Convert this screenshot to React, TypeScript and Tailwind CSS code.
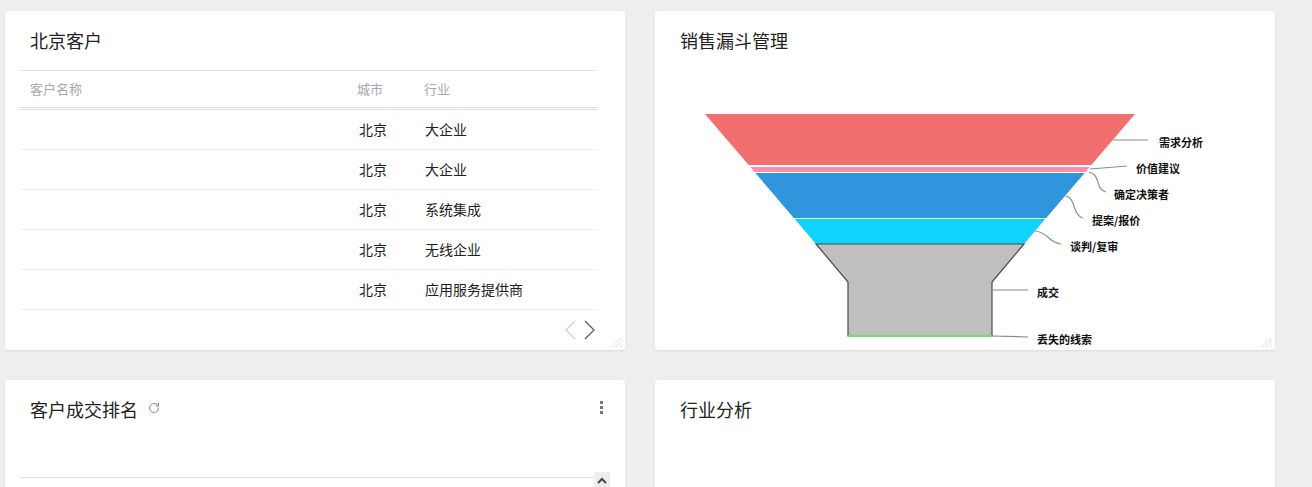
import { RotateCw } from "lucide-react";

const rows = [
  { city: "北京", industry: "大企业" },
  { city: "北京", industry: "大企业" },
  { city: "北京", industry: "系统集成" },
  { city: "北京", industry: "无线企业" },
  { city: "北京", industry: "应用服务提供商" },
];

const font = { fontFamily: '"Noto Sans CJK SC", "Liberation Sans", sans-serif' };

function ResizeHandle() {
  return (
    <svg width="12" height="12" viewBox="0 0 12 12">
      <line x1="1" y1="11" x2="11" y2="1" stroke="#c8c8c8" strokeDasharray="1 1" />
      <line x1="5" y1="11" x2="11" y2="5" stroke="#c8c8c8" strokeDasharray="1 1" />
      <line x1="9" y1="11" x2="11" y2="9" stroke="#c8c8c8" strokeDasharray="1 1" />
    </svg>
  );
}

function CardTitle({ children }: { children: React.ReactNode }) {
  return (
    <div className="flex h-[59px] items-center pl-[25px] pr-[20px] text-[18px] text-[#222]">
      {children}
    </div>
  );
}

function CustomersCard() {
  return (
    <div className="relative flex h-[339px] flex-col rounded-[3px] bg-white shadow-[0_1px_2px_rgba(0,0,0,0.08)]">
      <CardTitle>北京客户</CardTitle>
      <div className="ml-[15px] mr-[28px] border-t border-[#e3e3e3]">
        <div className="grid h-[39px] grid-cols-[327px_67px_1fr] items-center border-b-[3px] border-double border-[#dcdcdc] text-[13px] text-[#a8a8a8]">
          <div className="pl-[10px]">客户名称</div>
          <div className="pl-[10px]">城市</div>
          <div className="pl-[10px]">行业</div>
        </div>
        {rows.map((r, i) => (
          <div
            key={i}
            className="grid h-[40px] grid-cols-[327px_67px_1fr] items-center border-b border-[#eeeeee] text-[14px] text-[#222]"
          >
            <div />
            <div className="pl-[12px]">{r.city}</div>
            <div className="pl-[11px]">{r.industry}</div>
          </div>
        ))}
      </div>
      <div className="mt-auto mb-[10px] flex justify-end gap-[8px] pr-[30px]">
        <svg width="11" height="20" viewBox="0 0 11 20">
          <polyline points="10,1 1,10 10,19" fill="none" stroke="#d0d0d0" strokeWidth="1.2" />
        </svg>
        <svg width="11" height="20" viewBox="0 0 11 20">
          <polyline points="1,1 10,10 1,19" fill="none" stroke="#555" strokeWidth="1.2" />
        </svg>
      </div>
      <div className="absolute bottom-[2px] right-[2px]">
        <ResizeHandle />
      </div>
    </div>
  );
}

const labelStyle = { fontSize: 11, fontWeight: 700, fill: "#111" };

function FunnelCard() {
  return (
    <div className="relative flex h-[339px] flex-col rounded-[3px] bg-white shadow-[0_1px_2px_rgba(0,0,0,0.08)]">
      <CardTitle>销售漏斗管理</CardTitle>
      <svg width="620" height="280" viewBox="0 0 620 280">
        <polygon points="50,44 480,44 436.4,95 93.6,95" fill="#f26f6f" />
        <polygon points="95.3,97 434.7,97 430.5,102 99.5,102" fill="#f58fb5" />
        <polygon points="100.4,103 429.6,103 391.2,148 138.8,148" fill="#2f95dc" />
        <polygon points="139.7,149 390.3,149 369,174 161,174" fill="#0dd3fd" />
        <polygon
          points="161,174 369,174 337,212 337,266 193,266 193,212"
          fill="#bfbfbf"
          stroke="#4a4a4a"
          strokeWidth="1.2"
        />
        <line x1="193" y1="266" x2="337" y2="266" stroke="#6fdc6f" strokeWidth="2" />

        <g fill="none" stroke="#8a8a8a" strokeWidth="1.2">
          <line x1="458" y1="70" x2="493" y2="70" />
          <line x1="435" y1="99" x2="472" y2="96" />
          <path d="M434,102 C446,104 440,120 451,122" />
          <path d="M411,126 C421,128 417,145 428,148" />
          <path d="M380,161 C393,162 394,173 406,174" />
          <line x1="338" y1="220" x2="373" y2="220" />
          <line x1="337" y1="266" x2="373" y2="267" />
        </g>
        <g style={labelStyle} dominantBaseline="middle">
          <text x="504" y="74">需求分析</text>
          <text x="481" y="100">价值建议</text>
          <text x="459" y="126">确定决策者</text>
          <text x="437" y="152">提案/报价</text>
          <text x="415" y="178">谈判/复审</text>
          <text x="382" y="224">成交</text>
          <text x="382" y="271">丢失的线索</text>
        </g>
      </svg>
      <div className="absolute bottom-[2px] right-[2px]">
        <ResizeHandle />
      </div>
    </div>
  );
}

function RankingCard() {
  return (
    <div className="flex h-[200px] flex-col rounded-[3px] bg-white shadow-[0_1px_2px_rgba(0,0,0,0.08)]">
      <div className="flex h-[59px] items-center pl-[25px] pr-[20px] text-[18px] text-[#222]">
        <span>客户成交排名</span>
        <RotateCw size={12} strokeWidth={2} className="ml-[10px] mt-[-3px] text-[#888]" />
        <div className="ml-auto mt-[-4px] mr-[2px] flex flex-col gap-[2px]">
          <span className="block h-[3px] w-[3px] bg-[#777]" />
          <span className="block h-[3px] w-[3px] bg-[#777]" />
          <span className="block h-[3px] w-[3px] bg-[#777]" />
        </div>
      </div>
      <div className="mt-[33px] flex items-start pl-[15px] pr-[15px]">
        <div className="mt-[5px] h-[1px] flex-1 bg-[#e0e0e0]" />
        <div className="flex h-[16px] w-[16px] items-center justify-center bg-[#eeeeee]">
          <svg width="10" height="7" viewBox="0 0 10 7">
            <polyline points="1,6 5,2 9,6" fill="none" stroke="#444" strokeWidth="2" />
          </svg>
        </div>
      </div>
    </div>
  );
}

function IndustryCard() {
  return (
    <div className="flex h-[200px] flex-col rounded-[3px] bg-white shadow-[0_1px_2px_rgba(0,0,0,0.08)]">
      <CardTitle>行业分析</CardTitle>
    </div>
  );
}

export default function App() {
  return (
    <div className="h-[487px] overflow-hidden bg-[#eeeeee]" style={font}>
      <div className="grid grid-cols-[620px_620px] gap-x-[30px] gap-y-[30px] pl-[5px] pt-[11px]">
        <CustomersCard />
        <FunnelCard />
        <RankingCard />
        <IndustryCard />
      </div>
    </div>
  );
}
